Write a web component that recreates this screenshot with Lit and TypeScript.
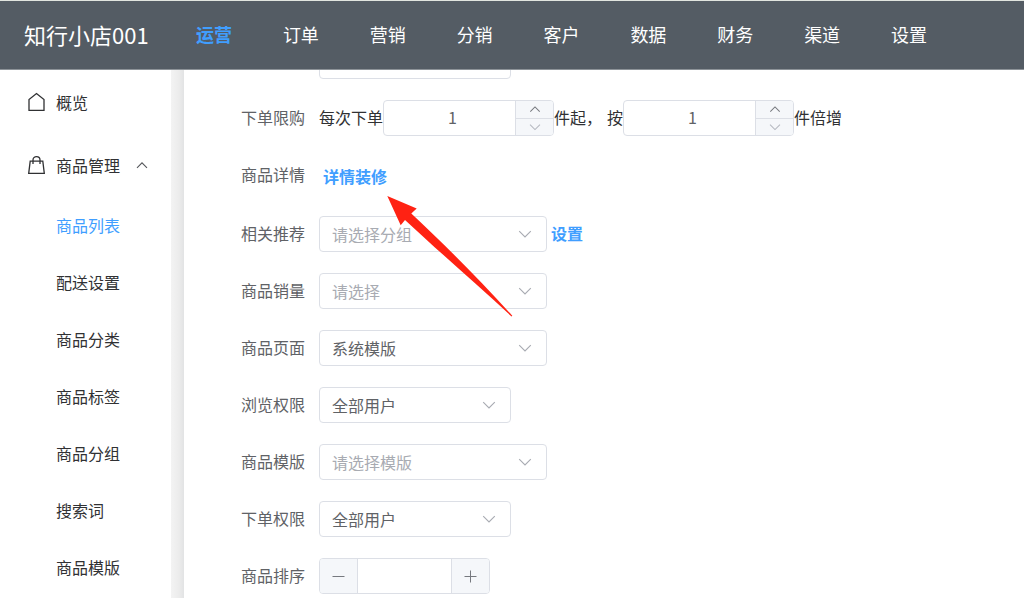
import { LitElement, html, css, svg, nothing } from "lit";
import { customElement, property, state } from "lit/decorators.js";
import { classMap } from "lit/directives/class-map.js";

const chevronDown = html`<svg class="chevron" viewBox="0 0 14 14" aria-hidden="true">
  <path d="M1.2 4.2 L7 10 L12.8 4.2" />
</svg>`;

const chevronUp = html`<svg class="chevron" viewBox="0 0 14 14" aria-hidden="true">
  <path d="M1.5 10 L7 4.5 L12.5 10" />
</svg>`;

const controlStyles = css`
  * {
    box-sizing: border-box;
  }
  input,
  select,
  button {
    font: inherit;
    color: #606266;
    margin: 0;
  }
  .chevron {
    width: 14px;
    height: 14px;
    fill: none;
    stroke: #a8abb2;
    stroke-width: 1.1;
  }
`;

@customElement("shop-header")
export class ShopHeader extends LitElement {
  static styles = css`
    :host {
      display: block;
      flex: none;
    }
    .bar {
      box-sizing: border-box;
      display: flex;
      align-items: center;
      height: 70px;
      padding: 0 24px 2px;
      background: #545c64;
      border-top: 1px solid #e1e5df;
      border-bottom: 1px solid #8d9398;
      color: #fff;
      white-space: nowrap;
    }
    .brand {
      width: 172px;
      flex: none;
      font-size: 22px;
    }
    .menu {
      display: flex;
      justify-content: space-between;
      flex: 0 1 731px;
      font-size: 18px;
    }
    .link {
      color: #fff;
      text-decoration: none;
    }
    .active {
      color: #409eff;
      font-weight: 600;
    }
  `;

  private items = ["运营", "订单", "营销", "分销", "客户", "数据", "财务", "渠道", "设置"];
  @state() private current = "运营";

  render() {
    return html`<header class="bar">
      <div class="brand">知行小店001</div>
      <nav class="menu">
        ${this.items.map(
          (item) => html`<a
            href="#"
            class=${classMap({ link: true, active: item === this.current })}
            @click=${() => (this.current = item)}
            >${item}</a
          >`
        )}
      </nav>
    </header>`;
  }
}

@customElement("shop-sidebar")
export class ShopSidebar extends LitElement {
  static styles = css`
    :host {
      display: block;
      flex: none;
      width: 171px;
      font-size: 16px;
    }
    .item,
    .sub {
      display: flex;
      align-items: center;
      color: #303133;
      text-decoration: none;
      white-space: nowrap;
    }
    .item {
      height: 63px;
      padding-left: 27px;
      gap: 10px;
    }
    .sub {
      height: 57px;
      padding-left: 56px;
    }
    .active {
      color: #409eff;
    }
    .icon {
      width: 19px;
      height: 20px;
      fill: none;
      stroke: #303133;
      stroke-width: 1.3;
    }
    .fold {
      width: 14px;
      height: 14px;
      margin-left: 5px;
      fill: none;
      stroke: #55575b;
      stroke-width: 1.1;
    }
  `;

  private subs = ["商品列表", "配送设置", "商品分类", "商品标签", "商品分组", "搜索词", "商品模版"];
  @state() private current = "商品列表";

  render() {
    return html`<nav>
      <a class="item" href="#">
        <svg class="icon" viewBox="0 0 19 20" aria-hidden="true">
          <path d="M2 18.3 V7.6 L9.5 1.6 L17 7.6 V18.3 Z" />
        </svg>
        <span>概览</span>
      </a>
      <a class="item" href="#">
        <svg class="icon" viewBox="0 0 19 20" aria-hidden="true">
          <path d="M3.2 6.2 H15.8 L17.3 18.3 H1.7 Z" />
          <path d="M6 9 V5 C6 0.6 13 0.6 13 5 V9" />
        </svg>
        <span>商品管理</span>
        <svg class="fold" viewBox="0 0 14 14" aria-hidden="true">
          <path d="M2 9.8 L7 4.8 L12 9.8" />
        </svg>
      </a>
      ${this.subs.map(
        (item) => html`<a
          href="#"
          class=${classMap({ sub: true, active: item === this.current })}
          @click=${() => (this.current = item)}
          >${item}</a
        >`
      )}
    </nav>`;
  }
}

@customElement("shop-select")
export class ShopSelect extends LitElement {
  static styles = [
    controlStyles,
    css`
      :host {
        display: block;
        width: 228px;
      }
      :host([compact]) {
        width: 192px;
      }
      .wrap {
        display: grid;
        align-items: center;
      }
      .field,
      .chevron {
        grid-area: 1 / 1;
      }
      .field {
        width: 100%;
        height: 36px;
        padding: 0 36px 4px 12px;
        appearance: none;
        background: #fff;
        border: 1px solid #dcdfe6;
        border-radius: 4px;
      }
      .empty {
        color: #a8abb2;
      }
      .chevron {
        justify-self: end;
        margin-right: 15px;
        pointer-events: none;
      }
    `,
  ];

  @property() label = "";
  @property() value = "";
  @property() placeholder = "";
  @property({ type: Boolean, reflect: true }) compact = false;

  render() {
    return html`<div class="wrap">
      <select class=${classMap({ field: true, empty: !this.value })} aria-label=${this.label}>
        <option>${this.value || this.placeholder}</option>
      </select>
      ${chevronDown}
    </div>`;
  }
}

@customElement("shop-number")
export class ShopNumber extends LitElement {
  static styles = [
    controlStyles,
    css`
      :host {
        display: block;
        width: 171px;
      }
      .box {
        display: flex;
        height: 36px;
        border: 1px solid #dcdfe6;
        border-radius: 4px;
        overflow: hidden;
        background: #fff;
      }
      .field {
        flex: 1;
        min-width: 0;
        padding: 0 0 2px 6px;
        border: 0;
        text-align: center;
        background: none;
      }
      .side {
        display: flex;
        flex-direction: column;
        width: 38px;
        border-left: 1px solid #dcdfe6;
      }
      .step {
        display: flex;
        align-items: center;
        justify-content: center;
        flex: 1;
        min-height: 0;
        padding: 0;
        border: 0;
        background: #f5f7fa;
      }
      .step + .step {
        border-top: 1px solid #dcdfe6;
      }
      .step .chevron {
        width: 12px;
        height: 12px;
        stroke: #76797f;
        stroke-width: 1.2;
      }
      .step:disabled .chevron {
        stroke: #b4b8c0;
      }
      .wide {
        flex: 0 0 38px;
      }
      .minus {
        border-right: 1px solid #dcdfe6;
      }
      .plus {
        border-left: 1px solid #dcdfe6;
      }
      .sign {
        width: 14px;
        height: 14px;
        fill: none;
        stroke: #76797f;
        stroke-width: 1;
      }
    `,
  ];

  @property() label = "";
  @property() value = "";
  @property({ type: Boolean }) split = false;

  private change(by: number) {
    this.value = String((Number(this.value) || 0) + by);
  }

  private sign(d: string) {
    return html`<svg class="sign" viewBox="0 0 14 14" aria-hidden="true">${svg`<path d=${d} />`}</svg>`;
  }

  render() {
    const field = html`<input class="field" type="text" aria-label=${this.label} .value=${this.value} />`;
    if (this.split) {
      return html`<div class="box">
        <button class="step wide minus" type="button" aria-label="减少" @click=${() => this.change(-1)}>
          ${this.sign("M0.5 7.5 H12.5")}
        </button>
        ${field}
        <button class="step wide plus" type="button" aria-label="增加" @click=${() => this.change(1)}>
          ${this.sign("M0.5 7.5 H12.5 M6.5 1.5 V13.5")}
        </button>
      </div>`;
    }
    return html`<div class="box">
      ${field}
      <div class="side">
        <button class="step" type="button" aria-label="增加" @click=${() => this.change(1)}>${chevronUp}</button>
        <button
          class="step"
          type="button"
          aria-label="减少"
          ?disabled=${Number(this.value) <= 1}
          @click=${() => this.change(-1)}
        >
          ${chevronDown}
        </button>
      </div>
    </div>`;
  }
}

interface SelectRow {
  label: string;
  value?: string;
  placeholder?: string;
  compact?: boolean;
  link?: string;
}

@customElement("product-form")
export class ProductForm extends LitElement {
  static styles = css`
    * {
      box-sizing: border-box;
    }
    :host {
      display: block;
      position: relative;
      flex: 1;
      min-width: 0;
      overflow: hidden;
      font-size: 16px;
      color: #303133;
      background: #fff;
    }
    .form {
      display: flex;
      flex-direction: column;
      gap: 21px;
      margin-top: -27px;
      padding: 0 24px 24px 57px;
      white-space: nowrap;
    }
    .row {
      display: grid;
      grid-template-columns: 64px 1fr;
      column-gap: 14px;
      line-height: 34px;
    }
    .label {
      color: #606266;
    }
    .content {
      display: flex;
      grid-column: 2;
    }
    .text {
      width: 192px;
      height: 36px;
      border: 1px solid #dcdfe6;
      border-radius: 4px;
    }
    .next {
      margin-left: 5px;
    }
    .link {
      margin-left: 4px;
      color: #409eff;
      font-weight: 600;
      text-decoration: none;
    }
    .tall {
      line-height: 38px;
    }
    .arrow {
      position: absolute;
      left: 203px;
      top: 126px;
      width: 126px;
      height: 121px;
      fill: #ff2213;
      pointer-events: none;
    }
  `;

  private rows: SelectRow[] = [
    { label: "相关推荐", placeholder: "请选择分组", link: "设置" },
    { label: "商品销量", placeholder: "请选择" },
    { label: "商品页面", value: "系统模版" },
    { label: "浏览权限", value: "全部用户", compact: true },
    { label: "商品模版", placeholder: "请选择模版" },
    { label: "下单权限", value: "全部用户", compact: true },
  ];

  render() {
    return html`
      <form class="form">
        <div class="row">
          <div class="content"><input class="text" type="text" aria-label="商品" /></div>
        </div>
        <div class="row">
          <span class="label">下单限购</span>
          <div class="content">
            <span>每次下单</span>
            <shop-number label="每次下单" value="1"></shop-number>
            <span>件起，</span>
            <span class="next">按</span>
            <shop-number label="倍增" value="1"></shop-number>
            <span>件倍增</span>
          </div>
        </div>
        <div class="row">
          <span class="label">商品详情</span>
          <div class="content tall"><a class="link" href="#">详情装修</a></div>
        </div>
        ${this.rows.map(
          (row) => html`<div class="row">
            <span class="label">${row.label}</span>
            <div class="content">
              <shop-select
                label=${row.label}
                value=${row.value ?? ""}
                placeholder=${row.placeholder ?? ""}
                ?compact=${row.compact}
              ></shop-select>
              ${row.link ? html`<a class="link" href="#">${row.link}</a>` : nothing}
            </div>
          </div>`
        )}
        <div class="row">
          <span class="label">商品排序</span>
          <div class="content"><shop-number label="商品排序" split></shop-number></div>
        </div>
      </form>
      <svg class="arrow" viewBox="0 0 126 121" aria-hidden="true">
        <path d="M0.3 0 L29.7 12.5 L24.3 17.6 C56 47 93 84 125.3 119.8 L124.6 120.5 C90 88 51 55 18 24 L13.7 29.3 Z" />
      </svg>
    `;
  }
}

@customElement("app-root")
export class AppRoot extends LitElement {
  static styles = css`
    :host {
      display: flex;
      flex-direction: column;
      height: 100vh;
      overflow: hidden;
      background: #fff;
      font-family: "Noto Sans CJK SC", "Noto Sans", sans-serif;
    }
    .body {
      display: flex;
      flex: 1;
      min-height: 0;
    }
    .divider {
      flex: none;
      width: 13px;
      background: linear-gradient(to right, #f3f3f3, #ececec 60%, #e2e3e4);
    }
  `;

  render() {
    return html`
      <shop-header></shop-header>
      <div class="body">
        <shop-sidebar></shop-sidebar>
        <div class="divider"></div>
        <product-form></product-form>
      </div>
    `;
  }
}
